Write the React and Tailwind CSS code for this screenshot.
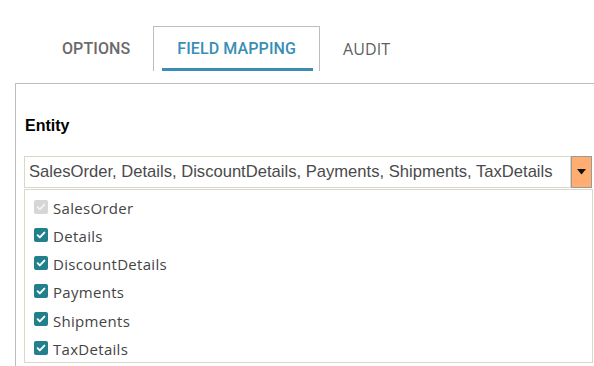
import { useState } from 'react';

const entities = [
  { name: 'SalesOrder', disabled: true },
  { name: 'Details' },
  { name: 'DiscountDetails' },
  { name: 'Payments' },
  { name: 'Shipments' },
  { name: 'TaxDetails' },
];

const CheckBox = ({ disabled }) => (
  <span
    className={`w-[14px] h-[14px] rounded-[2px] flex items-center justify-center shrink-0 -mt-[3px]
      ${disabled ? 'bg-[#d6d6d6]' : 'bg-[#22808c]'}`}
  >
    <svg className="w-[10px] h-[10px]" viewBox="0 0 10 10" fill="none">
      <path d="M1.6 5.2l2.2 2.2 4.6-4.8" stroke={disabled ? '#f2f2f2' : '#fff'} strokeWidth="1.9" strokeLinecap="round" strokeLinejoin="round" />
    </svg>
  </span>
);

export default function App() {
  const [activeTab, setActiveTab] = useState('FIELD MAPPING');
  const tabs = ['OPTIONS', 'FIELD MAPPING', 'AUDIT'];

  return (
    <div className="w-[594px] h-[366px] overflow-hidden bg-white">
      {/* Tabs */}
      <div className="flex pl-[39px] pt-[26px]">
        {tabs.map((tab) => {
          const isActive = activeTab === tab;
          return (
            <button
              key={tab}
              onClick={() => setActiveTab(tab)}
              className={`relative h-[45px] px-[23px] text-[16px] leading-none tracking-[0.1px]
                ${isActive ? 'border border-b-0 border-[#bdbdbd] text-[#3a8db5] font-medium' : 'text-[#6b6b6b] font-medium'}
                ${tab === 'AUDIT' ? 'font-["Open_Sans",sans-serif] !font-normal !text-[#5f5f5f]' : 'font-[Roboto,sans-serif]'}`}
            >
              {tab}
              {isActive && (
                <span className="absolute left-2 right-[6px] bottom-0 h-[3px] bg-[#3a8db5]" />
              )}
            </button>
          );
        })}
      </div>

      {/* Panel */}
      <div className="ml-[15px] mt-[12px] w-[600px] h-[300px] border-t border-l border-[#bdbdbd] pl-2 pt-[33px]">
        <div className="pl-[1px] text-[16px] font-bold text-black font-['Liberation_Sans',Arial,sans-serif] leading-[18px]">
          Entity
        </div>

        <div className="mt-[21px] flex h-[32px] w-[568px]">
          <div className="flex-1 border border-[#dcd8c8] flex items-center pl-1 text-[16.6px] text-[#4a4a4a] font-['Liberation_Sans',Arial,sans-serif] whitespace-nowrap overflow-hidden">
            SalesOrder, Details, DiscountDetails, Payments, Shipments, TaxDetails
          </div>
          <div className="w-[21px] bg-[#ffad70] border border-[#9a9a9a] flex items-center justify-center">
            <svg className="w-[9px] h-[6px]" viewBox="0 0 9 6">
              <path d="M0 0h9L4.5 5.5z" fill="#111" />
            </svg>
          </div>
        </div>

        <div className="mt-[1px] w-[569px] h-[174px] border border-[#dcd8c8] pt-[4px] pl-[9px]">
          {entities.map((e) => (
            <div key={e.name} className="h-[28.2px] flex items-center gap-[5px]">
              <CheckBox disabled={e.disabled} />
              <span className="text-[15px] text-[#444] font-['Open_Sans',sans-serif] tracking-[0.3px]">
                {e.name}
              </span>
            </div>
          ))}
        </div>
      </div>
    </div>
  );
}
